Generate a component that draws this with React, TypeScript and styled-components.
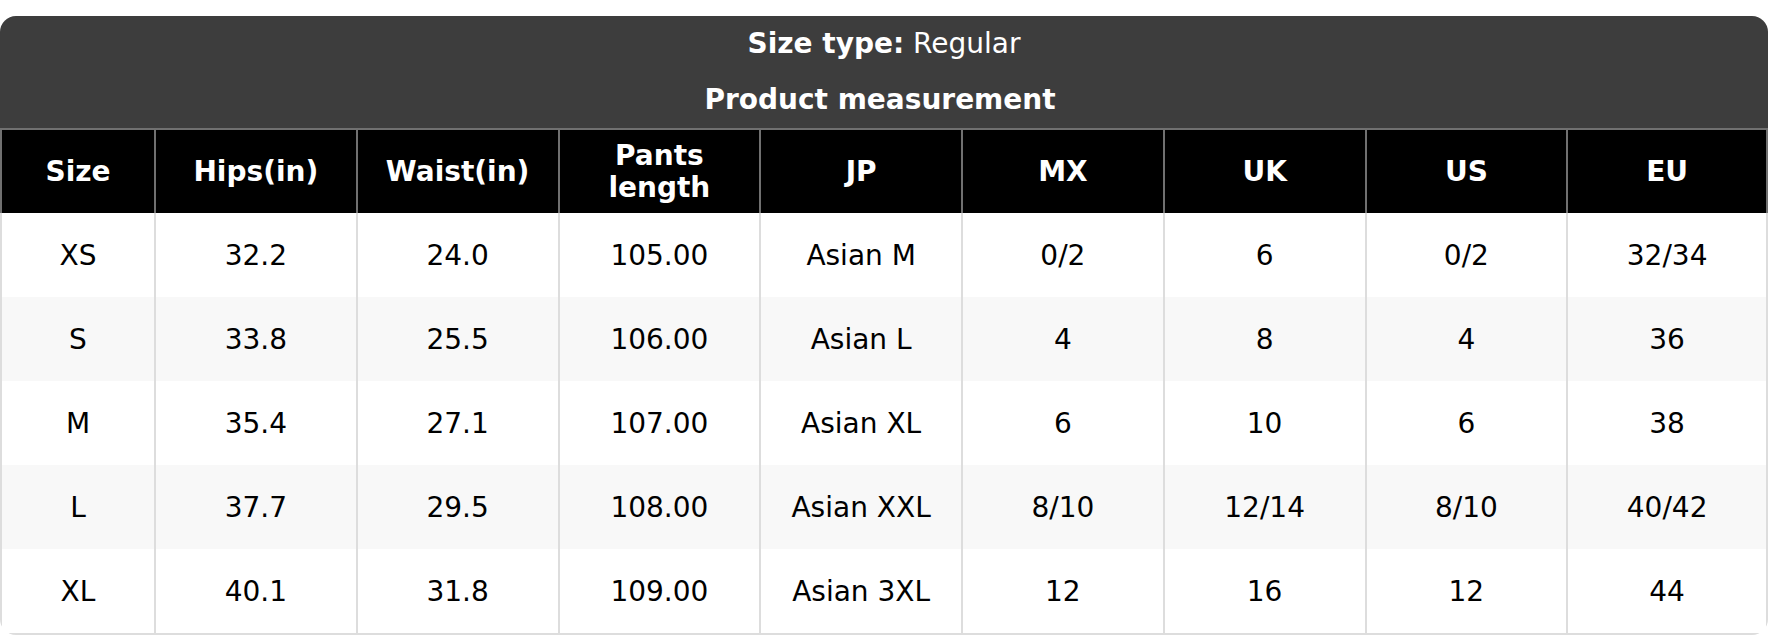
import styled, { createGlobalStyle } from "styled-components";

const GlobalStyle = createGlobalStyle`
  body {
    margin: 0;
    background: #fff;
    font-family: "DejaVu Sans", "Liberation Sans", sans-serif;
  }
`

const Card = styled.div`
  margin-top: 16px;
  width: 1768px;
  border-radius: 16px;
  overflow: hidden;
  font-size: 28px;
  color: #000;
`

const TitleBlock = styled.div`
  background: #3d3d3d;
  color: #fff;
  text-align: center;
`

const TitleLine = styled.div<{ $bold?: boolean }>`
  height: 56px;
  line-height: 56px;
  font-weight: ${(p) => (p.$bold ? 700 : 400)};
  padding-right: ${(p) => (p.$bold ? 8 : 0)}px;

  b {
    font-weight: 700;
  }
`

const Grid = styled.div`
  display: grid;
  grid-template-columns: 154px repeat(8, 1fr);
`

const HeaderCell = styled.div`
  box-sizing: border-box;
  height: 85px;
  padding: 0 12px;
  display: flex;
  align-items: center;
  justify-content: center;
  text-align: center;
  background: #000;
  color: #fff;
  font-weight: 700;
  line-height: 32px;
  border-top: 2px solid #707070;
  border-left: 2px solid #707070;

  &:nth-child(9n) {
    border-right: 2px solid #707070;
  }
`

const BodyCell = styled.div<{ $striped: boolean; $last: boolean }>`
  box-sizing: border-box;
  height: ${(p) => (p.$last ? 86 : 84)}px;
  display: flex;
  align-items: center;
  justify-content: center;
  background: ${(p) => (p.$striped ? "#f8f8f8" : "#fff")};
  border-left: 2px solid #dddddd;
  border-bottom: ${(p) => (p.$last ? "2px solid #dddddd" : "none")};

  &:nth-child(9n) {
    border-right: 2px solid #dddddd;
  }
`

const columns = ["Size", "Hips(in)", "Waist(in)", "Pants length", "JP", "MX", "UK", "US", "EU"];

const rows = [
  ["XS", "32.2", "24.0", "105.00", "Asian M", "0/2", "6", "0/2", "32/34"],
  ["S", "33.8", "25.5", "106.00", "Asian L", "4", "8", "4", "36"],
  ["M", "35.4", "27.1", "107.00", "Asian XL", "6", "10", "6", "38"],
  ["L", "37.7", "29.5", "108.00", "Asian XXL", "8/10", "12/14", "8/10", "40/42"],
  ["XL", "40.1", "31.8", "109.00", "Asian 3XL", "12", "16", "12", "44"],
];

const App = () => {
  return (
    <>
      <GlobalStyle />
      <Card>
        <TitleBlock>
          <TitleLine>
            <b>Size type:</b> Regular
          </TitleLine>
          <TitleLine $bold>Product measurement</TitleLine>
        </TitleBlock>
        <Grid>
          {columns.map((c) => (
            <HeaderCell key={c}>{c}</HeaderCell>
          ))}
          {rows.map((r, i) =>
            r.map((v, j) => (
              <BodyCell key={`${i}-${j}`} $striped={i % 2 === 1} $last={i === rows.length - 1}>
                {v}
              </BodyCell>
            ))
          )}
        </Grid>
      </Card>
    </>
  );
};

export default App;
